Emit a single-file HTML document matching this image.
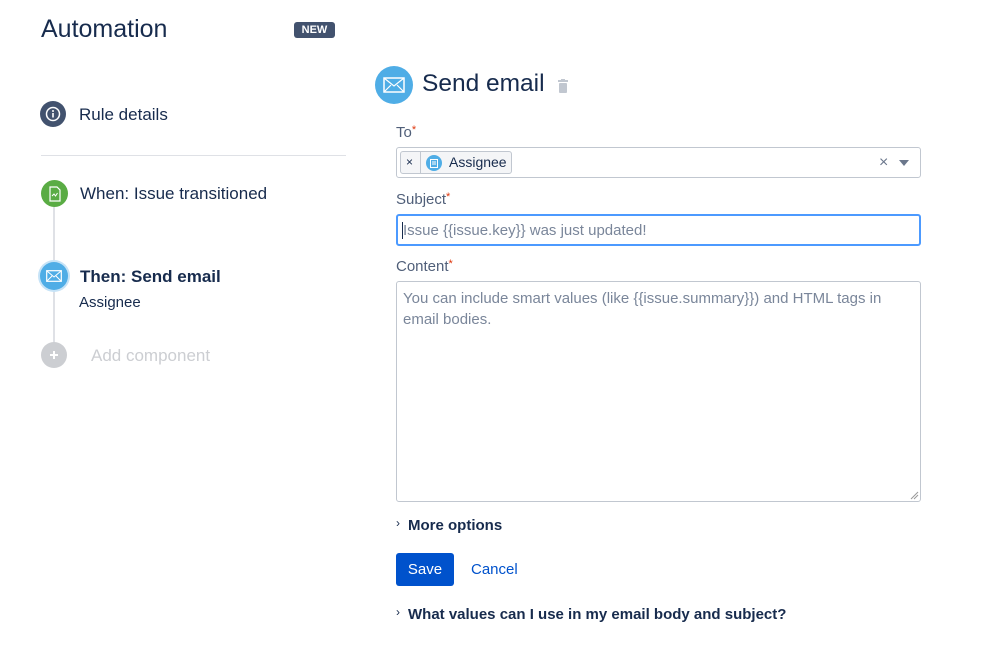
<!DOCTYPE html>
<html><head><meta charset="utf-8"><style>
*{box-sizing:border-box;margin:0;padding:0}
body{width:999px;height:661px;background:#fff;font-family:"Liberation Sans",sans-serif;color:#172b4d;position:relative;overflow:hidden}
.a{position:absolute}
.circ{position:absolute;border-radius:50%;display:flex;align-items:center;justify-content:center}
.lbl{font-size:15px;color:#505f79}
.req{color:#de350b;font-size:11px;vertical-align:top}
.box{position:absolute;border:1px solid #c1c7d0;border-radius:3px;background:#fff}
</style></head><body>
<div class="a" style="left:41px;top:15px;font-size:25px;color:#172b4d">Automation</div>
<div class="a" style="left:294px;top:22px;width:41px;height:16px;background:#42526e;border-radius:3px;color:#fff;font-size:11px;font-weight:bold;text-align:center;line-height:16px">NEW</div>

<div class="circ" style="left:40px;top:101px;width:26px;height:26px;background:#42526e">
<svg width="16" height="16" viewBox="0 0 16 16"><circle cx="8" cy="8" r="6.5" fill="none" stroke="#fff" stroke-width="1.5"/><rect x="7.2" y="7" width="1.6" height="4.5" fill="#fff"/><circle cx="8" cy="5" r="1" fill="#fff"/></svg></div>
<div class="a" style="left:79px;top:105px;font-size:17px;color:#172b4d">Rule details</div>
<div class="a" style="left:41px;top:155px;width:305px;height:1px;background:#dfe1e6"></div>

<div class="a" style="left:53px;top:193px;width:2px;height:160px;background:#dfe1e6"></div>
<div class="circ" style="left:41px;top:180px;width:27px;height:27px;background:#5aac44">
<svg width="14" height="16" viewBox="0 0 14 16"><path d="M2 1h7l3 3v11H2z" fill="none" stroke="#fff" stroke-width="1.2"/><path d="M4 10l2-2 1.5 2 2-3" fill="none" stroke="#fff" stroke-width="1"/></svg></div>
<div class="a" style="left:80px;top:184px;font-size:17px;color:#172b4d">When: Issue transitioned</div>

<div class="circ" style="left:40px;top:262px;width:28px;height:28px;background:#4fade6;box-shadow:0 0 0 2px #c6e3f7">
<svg width="16" height="12" viewBox="0 0 16 12"><rect x="0.7" y="0.7" width="14.6" height="10.6" fill="none" stroke="#fff" stroke-width="1.2"/><path d="M1 1l7 6 7-6M1 11l5-5M15 11l-5-5" fill="none" stroke="#fff" stroke-width="1"/></svg></div>
<div class="a" style="left:80px;top:267px;font-size:17px;font-weight:bold;color:#172b4d">Then: Send email</div>
<div class="a" style="left:79px;top:294px;font-size:15px;color:#172b4d">Assignee</div>

<div class="circ" style="left:41px;top:342px;width:26px;height:26px;background:#ccced2">
<svg width="12" height="12" viewBox="0 0 12 12"><path d="M6 2v8M2 6h8" stroke="#fff" stroke-width="2"/></svg></div>
<div class="a" style="left:91px;top:346px;font-size:17px;color:#ccced2">Add component</div>

<div class="circ" style="left:375px;top:66px;width:38px;height:38px;background:#4fade6">
<svg width="22" height="16" viewBox="0 0 22 16"><rect x="1" y="1" width="20" height="14" fill="none" stroke="#fff" stroke-width="1.5"/><path d="M1 1l10 8 10-8M1 15l7-7M21 15l-7-7" fill="none" stroke="#fff" stroke-width="1.2"/></svg></div>
<div class="a" style="left:422px;top:70px;font-size:24.5px;color:#172b4d">Send email</div>
<svg class="a" style="left:557px;top:79px" width="12" height="14" viewBox="0 0 12 14"><rect x="1" y="1" width="10" height="2" fill="#c1c7d0"/><rect x="4" y="0" width="4" height="1.5" fill="#c1c7d0"/><rect x="2" y="4" width="8" height="10" rx="1" fill="#c1c7d0"/></svg>

<div class="a lbl" style="left:396px;top:124px">To<span class="req">*</span></div>
<div class="box" style="left:396px;top:147px;width:525px;height:31px"></div>
<div class="a" style="left:400px;top:151px;width:112px;height:23px;border:1px solid #c1c7d0;border-radius:3px;background:#f4f5f7"></div>
<div class="a" style="left:420px;top:152px;width:1px;height:21px;background:#c1c7d0"></div>
<div class="a" style="left:406px;top:155px;font-size:12px;color:#172b4d">×</div>
<div class="circ" style="left:426px;top:155px;width:16px;height:16px;background:#4fade6"><svg width="8" height="9"><rect x="0.5" y="0.5" width="7" height="8" fill="none" stroke="#fff"/><path d="M2 3h4M2 5h4" stroke="#fff"/></svg></div>
<div class="a" style="left:449px;top:154px;font-size:14px;color:#172b4d">Assignee</div>
<div class="a" style="left:879px;top:154px;font-size:16px;color:#6b778c">×</div>
<div class="a" style="left:899px;top:160px;width:0;height:0;border-left:5px solid transparent;border-right:5px solid transparent;border-top:6px solid #6b778c"></div>

<div class="a lbl" style="left:396px;top:191px">Subject<span class="req">*</span></div>
<div class="box" style="left:396px;top:214px;width:525px;height:32px;border:2px solid #4c9aff"></div>
<div class="a" style="left:402px;top:222px;width:1px;height:17px;background:#172b4d"></div>
<div class="a" style="left:403px;top:222px;font-size:15px;color:#7a869a">Issue {{issue.key}} was just updated!</div>

<div class="a lbl" style="left:396px;top:258px">Content<span class="req">*</span></div>
<div class="box" style="left:396px;top:281px;width:525px;height:221px"></div>
<div class="a" style="left:403px;top:288px;width:500px;font-size:15px;line-height:21px;color:#7a869a">You can include smart values (like {{issue.summary}}) and HTML tags in email bodies.</div>
<svg class="a" style="left:910px;top:491px" width="9" height="9"><path d="M1 8L8 1M4 8L8 4" stroke="#999" stroke-width="1"/></svg>

<div class="a" style="left:396px;top:516px;font-size:12px;color:#172b4d">›</div>
<div class="a" style="left:408px;top:517px;font-size:15px;font-weight:bold;color:#172b4d">More options</div>

<div class="a" style="left:396px;top:553px;width:58px;height:33px;background:#0052cc;border-radius:3px;color:#fff;font-size:15px;text-align:center;line-height:33px">Save</div>
<div class="a" style="left:471px;top:561px;font-size:15px;color:#0052cc">Cancel</div>

<div class="a" style="left:396px;top:605px;font-size:12px;color:#172b4d">›</div>
<div class="a" style="left:408px;top:606px;font-size:15px;font-weight:bold;color:#172b4d">What values can I use in my email body and subject?</div>
</body></html>
